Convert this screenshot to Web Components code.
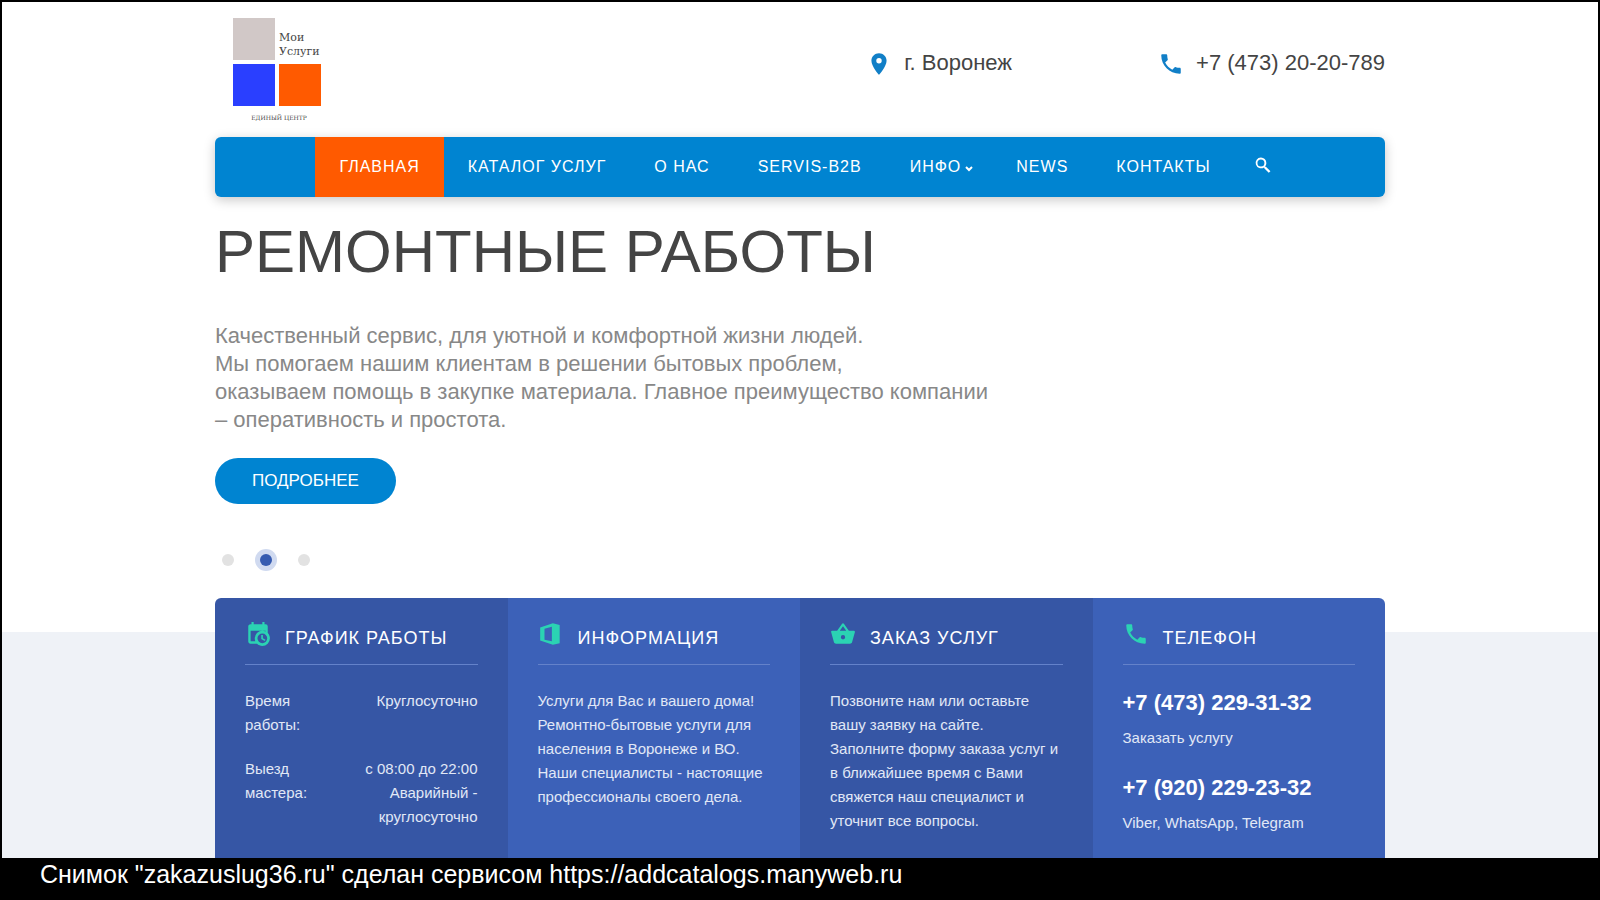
<!DOCTYPE html>
<html lang="ru">
<head>
<meta charset="utf-8">
<meta name="viewport" content="width=device-width, initial-scale=1">
<title>Мои Услуги — единый центр</title>
<style>
  body { margin: 0; font-family: "Liberation Sans", Arial, sans-serif; background: #fff; color: #444; }
</style>
</head>
<body>
<service-page></service-page>

<script>
const ICONS = {
  pin: 'M12 2C8.1 2 5 5.1 5 9c0 5.3 7 13 7 13s7-7.700 7-13c0-3.900-3.100-7-7-7zm0 9.500a2.500 2.500 0 1 1 0-5 2.500 2.500 0 0 1 0 5z',
  phone: 'M20 15.500c-1.200 0-2.500-.2-3.600-.6-.3-.1-.7 0-1 .2l-2.200 2.200c-2.800-1.400-5.100-3.800-6.600-6.600l2.200-2.200c.3-.3.4-.7.2-1C8.700 6.500 8.500 5.200 8.500 4c0-.5-.5-1-1-1H4c-.5 0-1 .5-1 1 0 9.400 7.600 17 17 17 .5 0 1-.5 1-1v-3.500c0-.5-.5-1-1-1z',
  search: 'M9.500 3A6.500 6.500 0 0 1 16 9.500c0 1.610-.59 3.090-1.560 4.230l.27.27h.79l5.400 5.400-2 2-5.400-5.400v-.79l-.27-.27A6.500 6.500 0 1 1 9.500 3m0 2.300a4.200 4.200 0 1 0 0 8.400 4.200 4.200 0 0 0 0-8.400z',
  calendar: 'M15,13H16.5V15.82L18.94,17.23L18.19,18.53L15,16.69V13M19,9H5.2V18.6H9.5C9.2,17.8 9,17 9,16A7,7 0 0,1 16,9C17.07,9 18.09,9.24 19,9.67V9M5,21C3.89,21 3,20.1 3,19V5C3,3.89 3.89,3 5,3H6V1H8V3H16V1H18V3H19A2,2 0 0,1 21,5V11.1C22.24,12.36 23,14.09 23,16A7,7 0 0,1 16,23C14.09,23 12.36,22.24 11.1,21H5M16,11.5A4.5,4.5 0 0,0 11.5,16A4.5,4.5 0 0,0 16,20.5A4.5,4.5 0 0,0 20.5,16A4.5,4.5 0 0,0 16,11.5Z',
  office: 'M2 6L13.700 2L20 3.600V20.600L13.700 22L2 18ZM6 7.200V17.200L12.800 18.800V5.200Z',
  basket: 'M5.5,21C4.72,21 4.04,20.55 3.71,19.9L1.1,10.44L1,10A1,1 0 0,1 2,9H6.58L11.18,2.43C11.36,2.17 11.66,2 12,2C12.34,2 12.65,2.17 12.83,2.44L17.42,9H22A1,1 0 0,1 23,10L22.96,10.29L20.29,19.9C19.96,20.55 19.28,21 18.5,21H5.5M12,4.74L9,9H15L12,4.74M12,13A2,2 0 0,0 10,15A2,2 0 0,0 12,17A2,2 0 0,0 14,15A2,2 0 0,0 12,13Z'
};

function component(name, html, setup) {
  customElements.define(name, class extends HTMLElement {
    constructor() {
      super();
      this.attachShadow({ mode: 'open' }).innerHTML = html;
    }
    connectedCallback() { if (setup) setup(this, this.shadowRoot); }
  });
}

component('ui-icon', `
  <style>
    :host { display: block; flex: none; width: 26px; height: 26px; }
    svg { display: block; width: 100%; height: 100%; fill: currentColor; }
  </style>
  <svg viewBox="0 0 24 24" aria-hidden="true"><path fill-rule="evenodd"/></svg>`,
  (el, root) => root.querySelector('path').setAttribute('d', ICONS[el.getAttribute('name')]));

component('site-logo', `
  <style>
    :host { display: block; font-family: "DejaVu Serif", serif; color: #444; }
    a { color: inherit; text-decoration: none; display: block; width: 88px; }
    .grid { display: grid; grid-template: 42px 42px / 42px 42px; gap: 4px; }
    .grey { background: #d1c8c7; }
    .blue { background: #2a3fff; }
    .orange { background: #ff5a00; }
    .name { font-size: 11px; line-height: 14px; align-self: end; padding-bottom: 1px; }
    .sub { font-size: 6px; line-height: 8px; text-align: center; margin-top: 8px; padding-left: 4px; }
  </style>
  <a href="#">
    <div class="grid">
      <span class="grey"></span><span class="name">Мои<br>Услуги</span>
      <span class="blue"></span><span class="orange"></span>
    </div>
    <div class="sub">ЕДИНЫЙ ЦЕНТР</div>
  </a>`);

component('contact-link', `
  <style>
    :host { display: block; }
    a { display: flex; align-items: center; gap: 12px; color: #444; text-decoration: none; font-size: 22px; line-height: 28px; }
    ui-icon { color: #117fc7; margin-top: 2px; }
  </style>
  <a><ui-icon></ui-icon><slot></slot></a>`,
  (el, root) => {
    root.querySelector('a').href = el.getAttribute('href');
    const icon = document.createElement('ui-icon');
    icon.setAttribute('name', el.getAttribute('icon'));
    root.querySelector('ui-icon').replaceWith(icon);
  });

component('site-header', `
  <style>
    :host { display: flex; justify-content: space-between; align-items: flex-start; padding: 16px 0 15px; min-height: 104px; }
    site-logo { margin-left: 18px; }
    .contacts { display: flex; gap: 146px; padding-top: 31px; }
  </style>
  <site-logo></site-logo>
  <div class="contacts">
    <contact-link icon="pin" href="#map">г. Воронеж</contact-link>
    <contact-link icon="phone" href="tel:+74732020789">+7 (473) 20-20-789</contact-link>
  </div>`);

component('site-nav', `
  <style>
    :host { display: block; background: #0084d1; border-radius: 6px; box-shadow: 0 3px 12px rgba(0,0,0,.22); }
    nav { display: flex; justify-content: center; }
    a, button { display: flex; align-items: center; height: 60px; color: #fff; }
    a { padding: 0 24px; font-size: 16px; line-height: 20px; letter-spacing: 1px; text-decoration: none; box-sizing: border-box; }
    a.active { background: #ff5a00; }
    button { border: 0; background: none; padding: 0 12px 4px 18px; cursor: pointer; }
    ui-icon { width: 20px; height: 20px; }
    .arrow { width: 8px; height: 6px; margin: 4px -5px 0 4px; fill: none; stroke: currentColor; stroke-width: 2; }
  </style>
  <nav aria-label="Главное меню">
    <a class="active" href="#">ГЛАВНАЯ</a>
    <a href="#catalog">КАТАЛОГ УСЛУГ</a>
    <a href="#about">О НАС</a>
    <a href="#b2b">SERVIS-B2B</a>
    <a href="#info">ИНФО<svg class="arrow" viewBox="0 0 8 6" aria-hidden="true"><path d="M1 1l3 3 3-3"/></svg></a>
    <a href="#news">NEWS</a>
    <a href="#contacts">КОНТАКТЫ</a>
    <button type="button" aria-label="Поиск"><ui-icon name="search"></ui-icon></button>
  </nav>`);

component('hero-slide', `
  <style>
    :host { display: block; padding: 25px 0 27px; }
    h1 { margin: 0 0 40px; font-size: 60px; line-height: 60px; font-weight: 400; color: #444; }
    p { margin: 0 0 24px; max-width: 790px; font-size: 22px; line-height: 28px; color: #888; }
    .more { display: block; height: 46px; padding: 0 37px; border: 0; border-radius: 23px; background: #0084d1; color: #fff; font: 17px/20px "Liberation Sans", Arial, sans-serif; cursor: pointer; }
    .dots { display: flex; gap: 16px; margin: 45px 0 0 2px; }
    .dots button { width: 22px; height: 22px; padding: 5px; border: 0; border-radius: 50%; background: none; cursor: pointer; }
    .dots button::before { content: ""; display: block; height: 12px; border-radius: 50%; background: #e2e2e2; }
    .dots .on { background: #d0daf0; }
    .dots .on::before { background: #365bb0; }
  </style>
  <h1>РЕМОНТНЫЕ РАБОТЫ</h1>
  <p>Качественный сервис, для уютной и комфортной жизни людей.<br>Мы помогаем нашим клиентам в решении бытовых проблем,<br>оказываем помощь в закупке материала. Главное преимущество компании – оперативность и простота.</p>
  <button class="more" type="button">ПОДРОБНЕЕ</button>
  <div class="dots">
    <button type="button" aria-label="Слайд 1"></button>
    <button type="button" class="on" aria-label="Слайд 2" aria-current="true"></button>
    <button type="button" aria-label="Слайд 3"></button>
  </div>`);

component('info-card', `
  <style>
    :host { display: block; padding: 23px 30px; background: #3c61b8; color: #e1e8f6; font-size: 15px; line-height: 24px; }
    :host([dark]) { background: #3656a5; }
    header { display: flex; align-items: flex-end; gap: 14px; padding-bottom: 17px; border-bottom: 1px solid #6482ca; margin-bottom: 24px; }
    ui-icon { color: #2bd3b3; }
    h2 { margin: 0; font-size: 18px; line-height: 18px; font-weight: 400; letter-spacing: 1px; color: #fff; }
  </style>
  <header><ui-icon></ui-icon><h2></h2></header>
  <slot></slot>`,
  (el, root) => {
    root.querySelector('h2').textContent = el.getAttribute('heading');
    const icon = document.createElement('ui-icon');
    icon.setAttribute('name', el.getAttribute('icon'));
    root.querySelector('ui-icon').replaceWith(icon);
  });

component('phone-entry', `
  <style>
    :host { display: block; }
    :host(:not(:last-child)) { margin-bottom: 24px; }
    a { display: block; color: #fff; font-size: 22px; line-height: 28px; font-weight: 700; text-decoration: none; margin-bottom: 9px; }
  </style>
  <a></a><slot></slot>`,
  (el, root) => {
    const a = root.querySelector('a');
    a.textContent = el.getAttribute('number');
    a.href = 'tel:' + el.getAttribute('number').replace(/[^+\d]/g, '');
  });

component('info-panel', `
  <style>
    :host { display: grid; grid-template-columns: repeat(4, 1fr); border-radius: 6px 6px 0 0; overflow: hidden; }
    p { margin: 0; }
    table { width: 100%; border-collapse: collapse; }
    th, td { padding: 0 0 20px; vertical-align: top; font-weight: 400; }
    th { text-align: left; width: 80px; }
    td { text-align: right; }
    tr:last-child > * { padding-bottom: 0; }
  </style>
  <info-card dark icon="calendar" heading="ГРАФИК РАБОТЫ">
    <table>
      <tr><th scope="row">Время работы:</th><td>Круглосуточно</td></tr>
      <tr><th scope="row">Выезд мастера:</th><td>с 08:00 до 22:00<br>Аварийный -<br>круглосуточно</td></tr>
    </table>
  </info-card>
  <info-card icon="office" heading="ИНФОРМАЦИЯ">
    <p>Услуги для Вас и вашего дома!<br>Ремонтно-бытовые услуги для населения в Воронеже и ВО.<br>Наши специалисты - настоящие профессионалы своего дела.</p>
  </info-card>
  <info-card dark icon="basket" heading="ЗАКАЗ УСЛУГ">
    <p>Позвоните нам или оставьте вашу заявку на сайте.<br>Заполните форму заказа услуг и в ближайшее время с Вами свяжется наш специалист и уточнит все вопросы.</p>
  </info-card>
  <info-card icon="phone" heading="ТЕЛЕФОН">
    <phone-entry number="+7 (473) 229-31-32">Заказать услугу</phone-entry>
    <phone-entry number="+7 (920) 229-23-32">Viber, WhatsApp, Telegram</phone-entry>
  </info-card>`);

component('caption-bar', `
  <style>
    :host { display: block; background: #000; color: #fff; padding: 2px 40px 12px; font-size: 25px; line-height: 28px; }
  </style>
  <slot></slot>`);

component('service-page', `
  <style>
    :host { display: flex; flex-direction: column; min-height: 100vh; }
    main { flex: 1; display: flex; flex-direction: column; border: solid #000; border-width: 2px 2px 0; }
    .wrap { width: 100%; max-width: 1170px; margin: 0 auto; }
    .band { flex: 1; display: flex; background: linear-gradient(#fff 34px, #eff2f7 34px); }
  </style>
  <main>
    <div class="wrap">
      <site-header></site-header>
      <site-nav></site-nav>
      <hero-slide></hero-slide>
    </div>
    <div class="band"><info-panel class="wrap"></info-panel></div>
  </main>
  <caption-bar>Снимок "zakazuslug36.ru" сделан сервисом https://addcatalogs.manyweb.ru</caption-bar>`);
</script>
</body>
</html>
